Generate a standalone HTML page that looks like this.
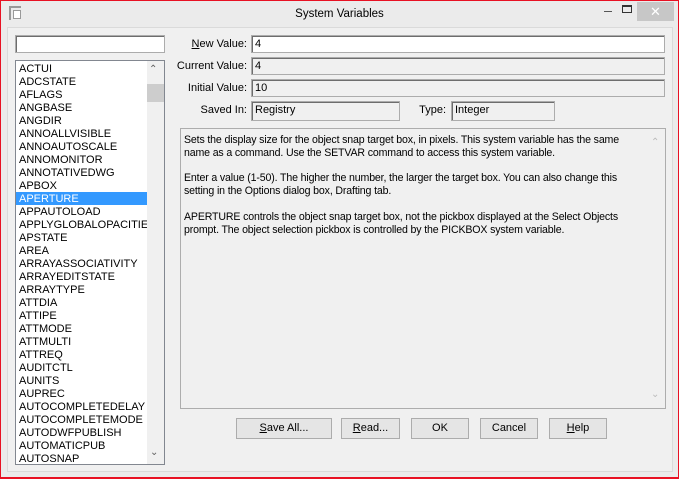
<!DOCTYPE html>
<html><head><style>
*{margin:0;padding:0;box-sizing:border-box}
body{width:679px;height:479px;background:#ebebeb;font-family:"Liberation Sans",sans-serif;font-size:11px;color:#000;position:relative;overflow:hidden}
.frame{position:absolute;left:0;top:0;width:679px;height:479px;border:1px solid #e81123;border-width:1px 1px 2px 1px}
.client{position:absolute;left:7px;top:27px;width:666px;height:445px;background:#f0f0f0;border:1px solid #dadada}
.title{position:absolute;top:8px;left:0;width:679px;text-align:center;font-size:11.5px}
.abs{position:absolute}
.inp{position:absolute;border:1px solid #acacac;background:#fff;box-shadow:inset 1px 1px 0 #6d6d6d;padding:1px 3px;line-height:14px;height:18px}
.ro{background:#f0f0f0}
.lbl{position:absolute;text-align:right;width:80px;line-height:18px}
.list{position:absolute;left:15px;top:60px;width:150px;height:405px;background:#fff;border:1px solid #828790;padding-top:1px}
.list div{height:13px;line-height:14px;padding-left:3px;white-space:nowrap;overflow:hidden;width:131px}
.sel{background:#3399ff;color:#fff}
.btn{position:absolute;top:418px;height:21px;border:1px solid #acacac;background:#e5e5e5;text-align:center;line-height:19px}
.desc{position:absolute;left:180px;top:128px;width:486px;height:281px;border:1px solid #adadad;background:#f0f0f0;padding:5px 20px 0 3px;line-height:12.8px;font-size:10.6px;letter-spacing:-0.15px}
</style></head><body>
<div class="frame"></div>
<div class="abs" style="left:9px;top:6px;width:12px;height:14px;border:2px solid #999;border-right:none;border-bottom:none"></div>
<div class="abs" style="left:13px;top:10px;width:8px;height:9px;border:1px solid #999;background:#fff"></div>
<div class="title">System Variables</div>
<div class="abs" style="left:604px;top:11px;width:8px;height:1px;background:#555"></div>
<div class="abs" style="left:622px;top:5px;width:10px;height:8px;border:1px solid #333;border-top-width:2px"></div>
<div class="abs" style="left:637px;top:2px;width:37px;height:19px;background:#c7c7c7;color:#fff;text-align:center;line-height:19px;font-size:13px">✕</div>
<div class="client"></div>
<div class="inp" style="left:15px;top:35px;width:150px;height:18px"></div>
<div class="list">
<div>ACTUI</div><div>ADCSTATE</div><div>AFLAGS</div><div>ANGBASE</div><div>ANGDIR</div><div>ANNOALLVISIBLE</div><div>ANNOAUTOSCALE</div><div>ANNOMONITOR</div><div>ANNOTATIVEDWG</div><div>APBOX</div><div class="sel">APERTURE</div><div>APPAUTOLOAD</div><div>APPLYGLOBALOPACITIES</div><div>APSTATE</div><div>AREA</div><div>ARRAYASSOCIATIVITY</div><div>ARRAYEDITSTATE</div><div>ARRAYTYPE</div><div>ATTDIA</div><div>ATTIPE</div><div>ATTMODE</div><div>ATTMULTI</div><div>ATTREQ</div><div>AUDITCTL</div><div>AUNITS</div><div>AUPREC</div><div>AUTOCOMPLETEDELAY</div><div>AUTOCOMPLETEMODE</div><div>AUTODWFPUBLISH</div><div>AUTOMATICPUB</div><div>AUTOSNAP</div>
<span class="abs" style="left:131px;top:0;width:17px;height:403px;background:#f0f0f0"></span>
<span class="abs" style="left:133px;top:3px;font-size:10px;color:#606060">⌃</span>
<span class="abs" style="left:131px;top:23px;width:17px;height:18px;background:#cdcdcd"></span>
<span class="abs" style="left:134px;top:386px;font-size:10px;color:#606060">⌄</span>
</div>
<div class="lbl" style="left:167px;top:35px"><u>N</u>ew Value:</div>
<div class="inp" style="left:251px;top:35px;width:414px">4</div>
<div class="lbl" style="left:167px;top:57px">Current Value:</div>
<div class="inp ro" style="left:251px;top:57px;width:414px">4</div>
<div class="lbl" style="left:167px;top:79px">Initial Value:</div>
<div class="inp ro" style="left:251px;top:79px;width:414px">10</div>
<div class="lbl" style="left:167px;top:101px">Saved In:</div>
<div class="inp ro" style="left:251px;top:101px;width:149px;height:20px">Registry</div>
<div class="lbl" style="left:366px;top:101px">Type:</div>
<div class="inp ro" style="left:451px;top:101px;width:104px;height:20px">Integer</div>
<div class="desc">Sets the display size for the object snap target box, in pixels. This system variable has the same name as a command. Use the SETVAR command to access this system variable.<br><br>Enter a value (1-50). The higher the number, the larger the target box. You can also change this setting in the Options dialog box, Drafting tab.<br><br>APERTURE controls the object snap target box, not the pickbox displayed at the Select Objects prompt. The object selection pickbox is controlled by the PICKBOX system variable.
<span class="abs" style="left:470px;top:8px;font-size:10px;color:#bbb">⌃</span>
<span class="abs" style="left:470px;top:260px;font-size:10px;color:#bbb">⌄</span></div>
<div class="btn" style="left:236px;width:96px"><u>S</u>ave All...</div>
<div class="btn" style="left:341px;width:59px"><u>R</u>ead...</div>
<div class="btn" style="left:411px;width:58px">OK</div>
<div class="btn" style="left:480px;width:58px">Cancel</div>
<div class="btn" style="left:549px;width:58px"><u>H</u>elp</div>
</body></html>
